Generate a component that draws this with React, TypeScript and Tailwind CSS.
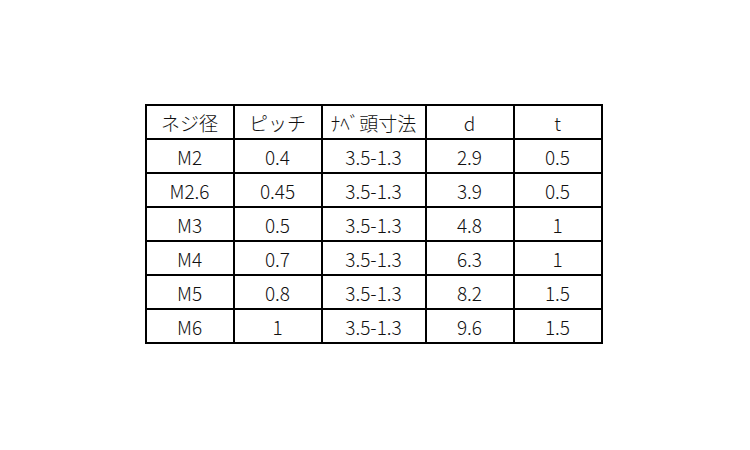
const header = ['ネジ径', 'ピッチ', 'ﾅﾍﾞ頭寸法', 'd', 't'];

const rows = [
  ['M2', '0.4', '3.5-1.3', '2.9', '0.5'],
  ['M2.6', '0.45', '3.5-1.3', '3.9', '0.5'],
  ['M3', '0.5', '3.5-1.3', '4.8', '1'],
  ['M4', '0.7', '3.5-1.3', '6.3', '1'],
  ['M5', '0.8', '3.5-1.3', '8.2', '1.5'],
  ['M6', '1', '3.5-1.3', '9.6', '1.5'],
];

const widths = ['w-[88px]', 'w-[88px]', 'w-[104px]', 'w-[88px]', 'w-[88px]'];

export default function App() {
  return (
    <div className="flex h-[450px] w-[750px] items-center justify-center bg-white pr-[3px] pb-[2px]">
      <table
        className="table-fixed border-collapse text-[19px] font-light leading-none text-[#111]"
        style={{ fontFamily: '"Noto Sans CJK JP", "Noto Sans", sans-serif' }}
      >
        <colgroup>
          {widths.map((w, i) => (
            <col key={i} className={w} />
          ))}
        </colgroup>
        <thead>
          <tr className="h-[34px]">
            {header.map((h, i) => (
              <th key={i} className="border-2 border-black p-0 text-center font-light">
                {h}
              </th>
            ))}
          </tr>
        </thead>
        <tbody>
          {rows.map((r, ri) => (
            <tr key={ri} className="h-[34px]">
              {r.map((c, ci) => (
                <td key={ci} className="border-2 border-black p-0 text-center">
                  {c}
                </td>
              ))}
            </tr>
          ))}
        </tbody>
      </table>
    </div>
  );
}
